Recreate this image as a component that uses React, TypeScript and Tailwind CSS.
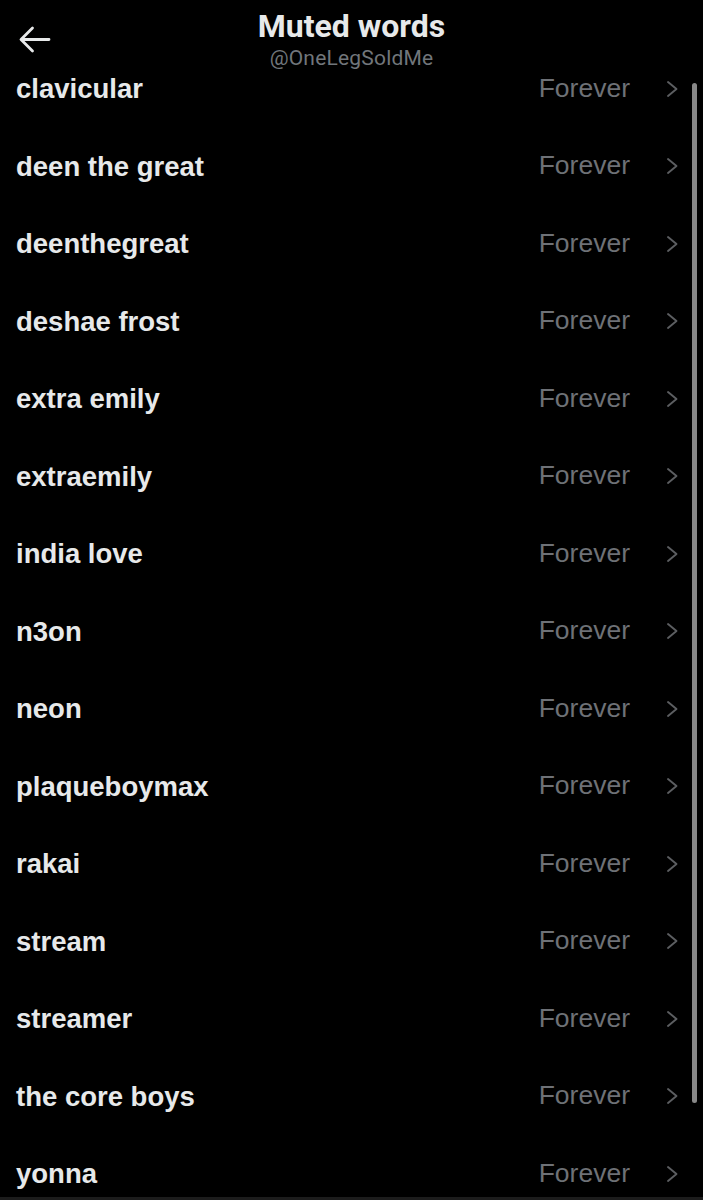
const WORDS = [
  'clavicular',
  'deen the great',
  'deenthegreat',
  'deshae frost',
  'extra emily',
  'extraemily',
  'india love',
  'n3on',
  'neon',
  'plaqueboymax',
  'rakai',
  'stream',
  'streamer',
  'the core boys',
  'yonna',
];

function Chevron() {
  return (
    <svg width="13" height="18" viewBox="0 0 13 18" fill="none" className="text-[#5c5e61]">
      <path d="M2 2 L10.5 9 L2 16" stroke="currentColor" strokeWidth="1.9" strokeLinecap="round" strokeLinejoin="round" />
    </svg>
  );
}

function BackArrow() {
  return (
    <svg width="33" height="29" viewBox="0 0 33 29" fill="none" className="absolute left-[18px] top-[25px] text-[#e7e9ea]">
      <path d="M31 14.5 H3.5 M14.5 3 L3 14.5 L14.5 26" stroke="currentColor" strokeWidth="2.8" strokeLinecap="round" strokeLinejoin="round" />
    </svg>
  );
}

export default function App() {
  return (
    <div className="relative w-[703px] h-[1200px] overflow-hidden bg-black text-[#e7e9ea] font-['Liberation_Sans',sans-serif]">
      {/* Header */}
      <div className="relative h-[49px]">
        <BackArrow />
        <div className="flex flex-col items-center pt-[7px]">
          <h1 className="font-['Roboto',sans-serif] font-bold text-[32px] leading-[38px]">
            Muted words
          </h1>
          <p className="font-['Roboto',sans-serif] text-[21px] leading-[26px] tracking-[0.2px] text-[#71767b]">@OneLegSoldMe</p>
        </div>
      </div>

      {/* List */}
      <ul className="mt-[1px]">
        {WORDS.map(w => (
          <li key={w} className="h-[77.5px] flex items-center pl-[16px] pr-[24px]">
            <span className="flex-1 font-bold text-[27.5px]">{w}</span>
            <span className="text-[#6e7176] text-[26.5px] mr-[36px]">Forever</span>
            <Chevron />
          </li>
        ))}
      </ul>

      {/* Scroll indicator */}
      <div className="absolute left-[692px] top-[83px] w-[5px] h-[1020px] rounded-full bg-[#888888]" />

      {/* Bottom edge */}
      <div className="absolute left-0 right-0 bottom-0 h-[3px] bg-[#1c1c1c]" />
    </div>
  );
}
